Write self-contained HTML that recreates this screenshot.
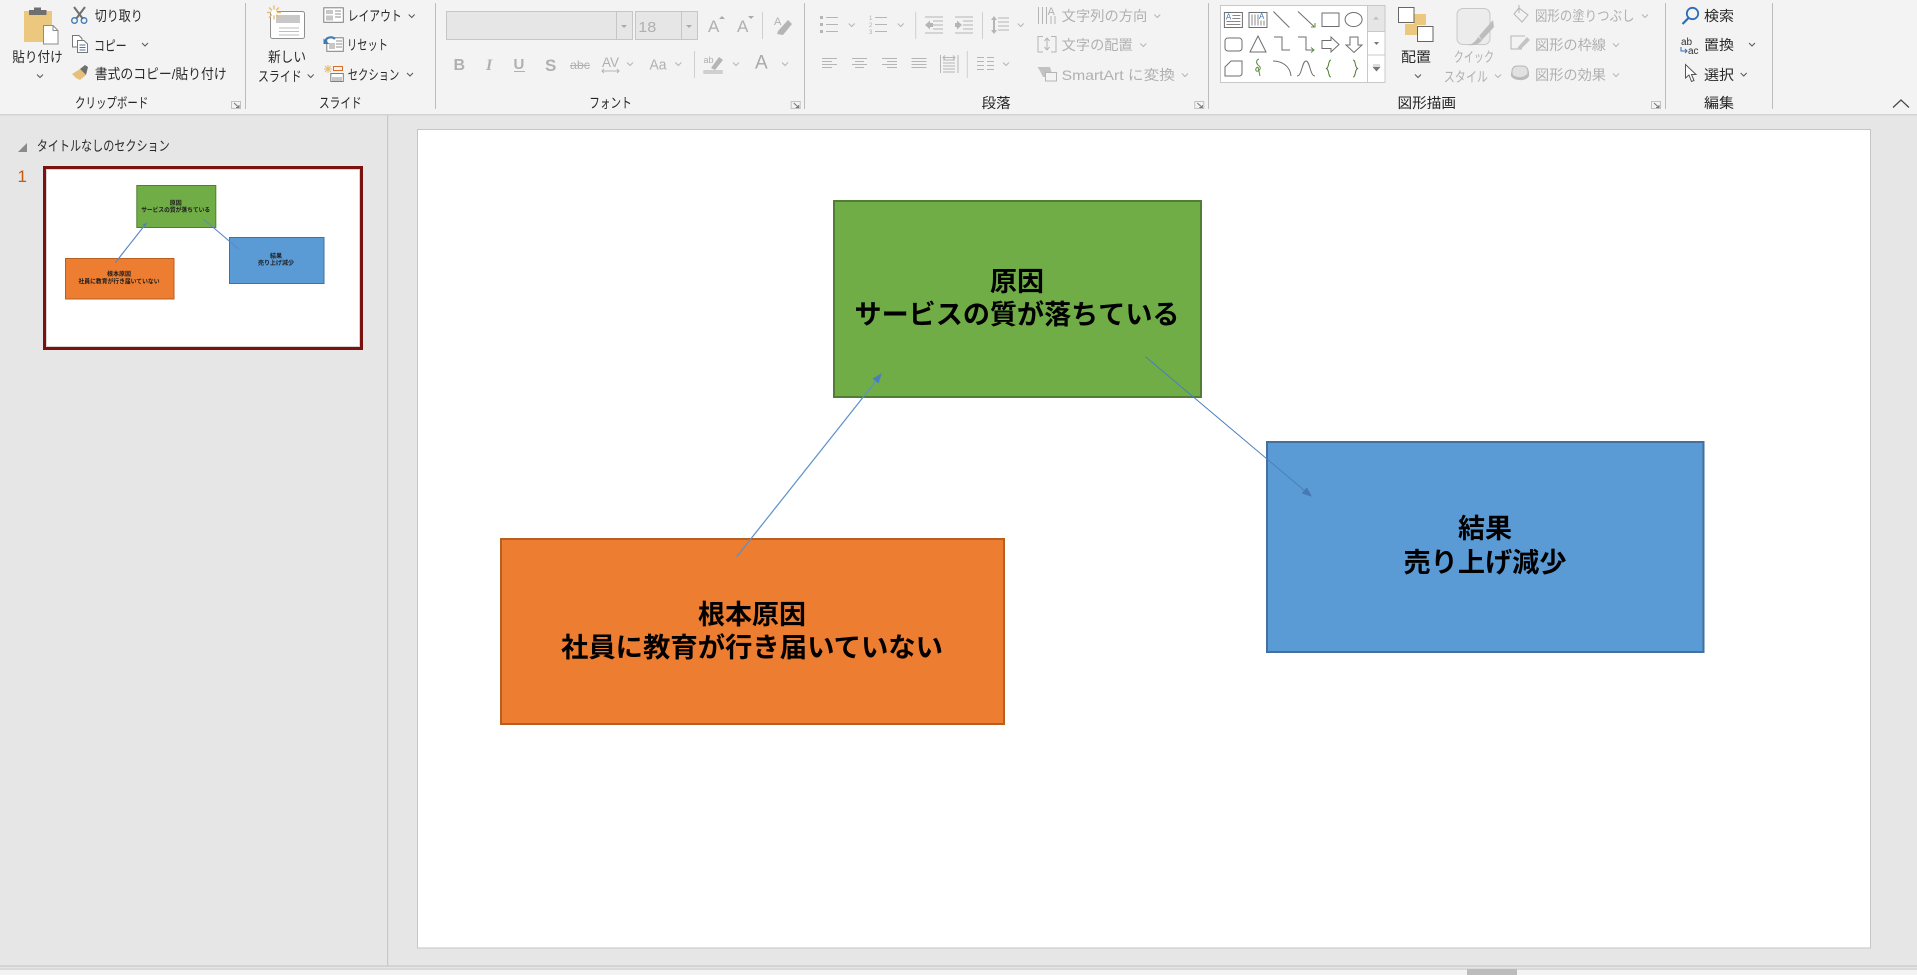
<!DOCTYPE html>
<html lang="ja"><head><meta charset="utf-8"><title>PowerPoint</title>
<style>
html,body{margin:0;padding:0;width:1917px;height:975px;overflow:hidden;background:#e6e6e6}
svg{display:block}
text{font-family:"Liberation Sans","Noto Sans CJK JP",sans-serif;font-size:14px;fill:#2a2a2a}
.d{fill:#b0b0b0}
.g{font-size:14px;fill:#262626}
.m{font-family:"Noto Sans CJK JP","Liberation Sans",sans-serif;font-size:27px;font-weight:700;fill:#000;text-anchor:middle}
.t{font-family:"Noto Sans CJK JP","Liberation Sans",sans-serif;font-size:6px;font-weight:700;fill:#1c1c1c;text-anchor:middle}
.sep{stroke:#bcbcbc;stroke-width:1}
.sub{stroke:#cfcfcf;stroke-width:1}
.ch{fill:none;stroke:#555;stroke-width:1}
.chd{fill:none;stroke:#b5b5b5;stroke-width:1}
.ic{fill:none;stroke:#b5b5b5;stroke-width:1}
.s{fill:none;stroke:#6e6e6e;stroke-width:1}
</style></head><body>
<svg width="1917" height="975" viewBox="0 0 1917 975" xmlns="http://www.w3.org/2000/svg">
<defs>
<path id="c" d="M-3,-1.5 L0,1.5 L3,-1.5"/>
<g id="lnch" fill="none" stroke="#a5a5a5"><path d="M0.5,0.5H9.5V7.5H0.5Z" stroke="#c2c2c2"/><path d="M3,2L8,6.5M5,6.5H8V4" stroke="#777"/></g>
</defs>

<!-- backgrounds -->
<rect x="0" y="0" width="1917" height="975" fill="#e6e6e6"/>
<rect x="0" y="0" width="1917" height="114" fill="#f3f3f3"/>
<rect x="0" y="114" width="1917" height="1.5" fill="#d3d3d3"/>
<rect x="387" y="115" width="1.2" height="851" fill="#c8c8c8"/>
<rect x="0" y="965.5" width="1917" height="1.2" fill="#c6c6c6"/>
<rect x="0" y="969" width="1917" height="6" fill="#f3f3f3"/>
<rect x="0" y="968.6" width="1917" height="1" fill="#c9c9c9"/>
<rect x="1467" y="969" width="50" height="6" fill="#bcbcbc"/>

<!-- separators -->
<g class="sep"><path d="M245.500,3V109M435.500,3V109M804.500,3V109M1208.500,3V109M1665.500,3V109M1772.500,3V109"/></g>

<!-- Clipboard group -->
<rect x="24" y="11" width="28" height="31" fill="#ecc87f"/>
<path d="M29,15V10H34V7.500H41V10H46.500V15Z" fill="#6f6f6f"/>
<path d="M43.500,25.500H53L58,30.500V44H43.500Z" fill="#fff" stroke="#8b8b8b"/>
<path d="M53,25.500V30.500H58" fill="none" stroke="#8b8b8b"/>
<text x="12.300" y="62" textLength="50.400" lengthAdjust="spacingAndGlyphs">貼り付け</text>
<use href="#c" x="40" y="76" class="ch"/>
<!-- scissors -->
<path d="M74,7L83,19M85,7L76,19" fill="none" stroke="#6f6f6f" stroke-width="2"/>
<circle cx="74.500" cy="20.500" r="2.800" fill="none" stroke="#3e78b5" stroke-width="1.300"/>
<circle cx="84" cy="20.500" r="2.800" fill="none" stroke="#3e78b5" stroke-width="1.300"/>
<text x="94.700" y="21" textLength="48" lengthAdjust="spacingAndGlyphs">切り取り</text>
<!-- copy -->
<path d="M72.500,35.500H79L82,38.500V47H72.500Z" fill="#fff" stroke="#777"/>
<path d="M77.500,40.500H84L87.500,44V52.500H77.500Z" fill="#fff" stroke="#777"/>
<path d="M79.500,45H85.500M79.500,47.500H85.500M79.500,50H85.500" stroke="#3e78b5"/>
<text x="94" y="51" textLength="32.700" lengthAdjust="spacingAndGlyphs">コピー</text>
<use href="#c" x="145" y="44.500" class="ch"/>
<!-- brush -->
<path d="M72,74L80,69L86,75L80,80L76,78Z" fill="#e6bf7a"/>
<path d="M80,69L85,65L88,67L86,75Z" fill="#6f6f6f"/>
<text x="94.700" y="79" textLength="132" lengthAdjust="spacingAndGlyphs">書式のコピー/貼り付け</text>
<text class="g" x="75" y="108" textLength="73.300" lengthAdjust="spacingAndGlyphs">クリップボード</text>
<use href="#lnch" x="231" y="101"/>

<!-- Slide group -->
<rect x="270.500" y="11.500" width="34" height="27" rx="2" fill="#fff" stroke="#8f8f8f"/>
<rect x="276" y="15" width="24" height="8" fill="#c8c8c8"/>
<path d="M279,28H299M279,31.500H299M279,35H299" stroke="#bdbdbd"/>
<g stroke="#e6bd74" stroke-width="1.400"><path d="M267,12.500H281M274,5.500V19.500M269,7.500L279,17.500M279,7.500L269,17.500"/></g>
<circle cx="274" cy="12.500" r="3" fill="#fff"/>
<text x="268" y="62" textLength="38" lengthAdjust="spacingAndGlyphs">新しい</text>
<text x="258" y="81.500" textLength="43.700" lengthAdjust="spacingAndGlyphs">スライド</text>
<use href="#c" x="310.700" y="76" class="ch"/>
<rect x="323.800" y="7.800" width="19.500" height="14.500" fill="#fff" stroke="#7f7f7f"/>
<rect x="326" y="10" width="7" height="4" fill="#c7c7c7"/><rect x="326" y="15.500" width="7" height="5" fill="#c7c7c7"/>
<path d="M335,11H341M335,14H341M335,17H341" stroke="#8f8f8f"/>
<text x="347.700" y="21" textLength="54" lengthAdjust="spacingAndGlyphs">レイアウト</text>
<use href="#c" x="411.700" y="16" class="ch"/>
<rect x="326.800" y="37.800" width="16.500" height="13.500" fill="#fff" stroke="#7f7f7f"/>
<rect x="329" y="43" width="6" height="6" fill="#c7c7c7"/>
<path d="M336,41H342M336,44H342M336,47H342" stroke="#8f8f8f"/>
<path d="M325,42C326,37 332,36 335,39" fill="none" stroke="#3e78b5" stroke-width="2"/>
<path d="M323.500,38.500L329.500,44H323.500Z" fill="#3e78b5"/>
<text x="347" y="50" textLength="41" lengthAdjust="spacingAndGlyphs">リセット</text>
<g stroke="#e6bd74" stroke-width="1.100"><path d="M324,69H332M328,65V73M325,66L331,72M331,66L325,72"/></g>
<rect x="333.500" y="66.500" width="9" height="4" fill="none" stroke="#d9702a"/>
<rect x="330.800" y="73.500" width="12.500" height="8" fill="#fff" stroke="#7f7f7f"/>
<rect x="332" y="77" width="10" height="4" fill="#c7c7c7"/>
<text x="347.700" y="80" textLength="51.600" lengthAdjust="spacingAndGlyphs">セクション</text>
<use href="#c" x="410" y="74.500" class="ch"/>
<text class="g" x="319" y="108" textLength="42.700" lengthAdjust="spacingAndGlyphs">スライド</text>

<!-- Font group -->
<rect x="446.500" y="11.500" width="186" height="28" fill="#e6e6e6" stroke="#c6c6c6"/>
<path d="M616.500,12V39" stroke="#c6c6c6"/>
<path d="M621,25H627L624,28Z" fill="#aaa"/>
<rect x="635.500" y="11.500" width="62" height="28" fill="#e6e6e6" stroke="#c6c6c6"/>
<path d="M681.500,12V39" stroke="#c6c6c6"/>
<path d="M686,25H692L689,28Z" fill="#aaa"/>
<text class="d" x="638.300" y="32" textLength="18" lengthAdjust="spacingAndGlyphs" style="font-size:15px">18</text>
<text class="d" x="708" y="32" style="font-size:17px">A</text><path d="M719,19H725L722,16Z" fill="#aaa"/>
<text class="d" x="737" y="32" style="font-size:17px">A</text><path d="M748,16H754L751,19Z" fill="#aaa"/>
<path class="sub" d="M762.500,12V39"/>
<text class="d" x="774" y="25" style="font-size:11px">A</text>
<path d="M778,31L788,20L792,24L783,35L777,34Z" fill="#b5b5b5"/>
<text class="d" x="453.500" y="70" style="font-size:16px;font-weight:700">B</text>
<text class="d" x="486" y="70" style="font-size:16px;font-style:italic;font-weight:700;font-family:'Liberation Serif',serif">I</text>
<text class="d" x="513.500" y="69" style="font-size:15px;font-weight:700">U</text><path d="M514,71.500H525" stroke="#b0b0b0"/>
<text class="d" x="545" y="71" style="font-size:17px;font-weight:700">S</text>
<text class="d" x="570" y="69" textLength="20" lengthAdjust="spacingAndGlyphs" style="font-size:12px">abc</text><path d="M570,65.500H590" stroke="#b0b0b0"/>
<text class="d" x="602" y="67" textLength="17" lengthAdjust="spacingAndGlyphs" style="font-size:14px">AV</text>
<path d="M602,71H619M604,69L602,71L604,73M617,69L619,71L617,73" class="ic"/>
<use href="#c" x="630" y="64" class="chd"/>
<text class="d" x="649.500" y="69.500" textLength="17" lengthAdjust="spacingAndGlyphs" style="font-size:15px">Aa</text>
<use href="#c" x="678.300" y="64" class="chd"/>
<path class="sub" d="M694.500,51V78"/>
<text class="d" x="703.500" y="63" style="font-size:9px">ab</text>
<path d="M711,68L719,57L723,60L715,70Z" fill="#b5b5b5"/>
<rect x="703.300" y="70" width="19.500" height="4" fill="#cfcfcf"/>
<use href="#c" x="736" y="64" class="chd"/>
<text class="d" x="755" y="68.500" style="font-size:19px;fill:#a8a8a8">A</text>
<use href="#c" x="785" y="64" class="chd"/>
<text class="g" x="589.300" y="108" textLength="42.400" lengthAdjust="spacingAndGlyphs">フォント</text>
<use href="#lnch" x="790.700" y="101"/>

<!-- Paragraph group -->
<g fill="#b5b5b5"><rect x="820" y="16" width="3" height="3"/><rect x="820" y="23" width="3" height="3"/><rect x="820" y="30" width="3" height="3"/></g>
<path class="ic" d="M826,17.500H838M826,24.500H838M826,31.500H838"/>
<use href="#c" x="851.700" y="25" class="chd"/>
<text class="d" x="869" y="20" style="font-size:6px">1</text><text class="d" x="869" y="27" style="font-size:6px">2</text><text class="d" x="869" y="34" style="font-size:6px">3</text>
<path class="ic" d="M875,17.500H887M875,24.500H887M875,31.500H887"/>
<use href="#c" x="900.700" y="25" class="chd"/>
<path class="sub" d="M915.700,12V39"/>
<path class="ic" d="M925,17H943M933,21H943M933,25H943M933,29H943M925,33H943"/>
<path d="M925,25L930,20.500V23H933V27H930V29.500Z" fill="#b5b5b5"/>
<path class="ic" d="M955,17H973M963,21H973M963,25H973M963,29H973M955,33H973"/>
<path d="M962,25L957,20.500V23H955V27H957V29.500Z" fill="#b5b5b5"/>
<path class="sub" d="M982.500,12V39"/>
<path class="ic" d="M998,18H1009M998,22H1009M998,26H1009M998,30H1009"/>
<path d="M994,16L997,20H995V30H997L994,34L991,30H993V20H991Z" fill="#b5b5b5"/>
<use href="#c" x="1020.700" y="25" class="chd"/>
<path class="ic" d="M1038.500,7V24M1042.500,7V24M1046.500,7V24"/>
<text class="d" x="1047.500" y="15" style="font-size:11px">A</text>
<path class="ic" d="M1051,16V24M1055,16V24"/>
<text class="d" x="1061.700" y="21" textLength="85.600" lengthAdjust="spacingAndGlyphs">文字列の方向</text>
<use href="#c" x="1157.300" y="16" class="chd"/>
<path class="ic" d="M1043,36.500H1038V52H1043M1051,36.500H1056V52H1051M1047,38V50M1044.500,41L1047,38L1049.500,41M1044.500,47L1047,50L1049.500,47"/>
<text class="d" x="1061.700" y="50" textLength="71" lengthAdjust="spacingAndGlyphs">文字の配置</text>
<use href="#c" x="1143.300" y="45" class="chd"/>
<path d="M1037.500,67H1050L1053,77H1043L1040,71Z" fill="#c2c2c2"/>
<rect x="1045.500" y="72.500" width="11" height="8.500" fill="#f3f3f3" stroke="#b5b5b5"/>
<text class="d" x="1061.700" y="80" textLength="113.300" lengthAdjust="spacingAndGlyphs">SmartArt に変換</text>
<use href="#c" x="1185" y="75" class="chd"/>
<path class="ic" d="M822,58.500H837M822,61.500H832M822,64.500H837M822,67.500H832"/>
<path class="ic" d="M852,58.500H867M855,61.500H864M852,64.500H867M855,67.500H864"/>
<path class="ic" d="M882,58.500H897M887,61.500H897M882,64.500H897M887,67.500H897"/>
<path class="ic" d="M911.500,58.500H926.500M911.500,61.500H926.500M911.500,64.500H926.500M911.500,67.500H926.500"/>
<path class="ic" d="M940.500,55V73M958,55V73M943,60H955M943,63H955M943,66H955M943,69H955M943,72H955"/>
<path class="ic" d="M943,57.500H955M945,55.500L943,57.500L945,59.500M953,55.500L955,57.500L953,59.500"/>
<path class="sub" d="M967.300,51V78"/>
<path class="ic" d="M977,57.500H984M987,57.500H994M977,61.500H984M987,61.500H994M977,65.500H984M987,65.500H994M977,69.500H984M987,69.500H994"/>
<use href="#c" x="1006" y="64" class="chd"/>
<text class="g" x="981.700" y="108" textLength="29" lengthAdjust="spacingAndGlyphs">段落</text>
<use href="#lnch" x="1194.300" y="101"/>

<!-- Shapes gallery -->
<rect x="1220.500" y="5.500" width="164.500" height="77" fill="#fff" stroke="#c8c8c8"/>
<rect x="1367.500" y="5.500" width="17.500" height="26" fill="#e6e6e6" stroke="#c8c8c8"/>
<path d="M1367.500,31.500H1385M1367.500,55H1385M1367.500,5V82" stroke="#c8c8c8" fill="none"/>
<path d="M1373,19.500H1379L1376,16.500Z" fill="#c0c0c0"/>
<path d="M1374,42H1379L1376.500,45Z" fill="#777"/>
<path d="M1373,65H1380M1373,67H1380L1376.500,71Z" fill="#777" stroke="#777" stroke-width=".6"/>
<g transform="translate(1233.400,19.500)"><rect class="s" x="-9" y="-7" width="18" height="15"/><text x="-7.500" y="0" style="font-size:8px;fill:#3e78b5">A</text><path d="M-1,-4H7M-1,-1H7M-7,2H7M-7,5H7" stroke="#888"/></g>
<g transform="translate(1258,19.500)"><rect class="s" x="-9" y="-7" width="18" height="15"/><text x="1" y="-.5" style="font-size:8px;fill:#3e78b5">A</text><path d="M-6,-5V6M-3,-5V6M0,-5V6M6,1V6M3,1V6" stroke="#888"/></g>
<path class="s" transform="translate(1281.400,19.500)" d="M-8,-8L8,8"/>
<g transform="translate(1306,19.500)"><path class="s" d="M-8,-8L8,7"/><path d="M5,7.500H9V3.500" fill="none" stroke="#5c8f3a"/></g>
<rect class="s" x="1322" y="13" width="17" height="13.500"/>
<ellipse class="s" cx="1353.600" cy="19.500" rx="8.500" ry="7"/>
<rect class="s" x="1225" y="38" width="17" height="13" rx="3"/>
<path class="s" d="M1258,36L1266,52H1250Z"/>
<path class="s" d="M1274,37H1282V50H1290"/>
<path class="s" d="M1298,37H1306V50H1314"/>
<path d="M1311,47.500L1314,50L1311,52.500" fill="none" stroke="#5c8f3a"/>
<path class="s" d="M1322,40.500H1331V37L1339,44.500L1331,52V48.500H1322Z"/>
<path class="s" d="M1350,37H1358V45H1362L1354,52.500L1346,45H1350Z"/>
<path class="s" d="M1225,67L1231,61H1242V73C1242,75 1241,76 1239,76H1225Z"/>
<path d="M1259,59C1256,60 1256,63 1258,65C1261,67 1261,69 1258,71C1255,72 1255,68 1258,67M1258,67L1260,76" fill="none" stroke="#5c8f3a"/>
<path class="s" d="M1273,61C1282,61 1290,66 1291,76"/>
<path class="s" d="M1297,76C1302,76 1302,61 1306,61C1310,61 1310,76 1315,76"/>
<path d="M1331,60C1328,60 1329.500,67 1326.500,68.500C1329.500,70 1328,77 1331,77" fill="none" stroke="#4a7a2e"/>
<path d="M1353,60C1356,60 1354.500,67 1357.500,68.500C1354.500,70 1356,77 1353,77" fill="none" stroke="#4a7a2e"/>

<!-- Arrange -->
<rect x="1414" y="14" width="12" height="11" fill="#ecc87f"/>
<rect x="1405" y="24" width="12" height="11" fill="#ecc87f"/>
<rect x="1398.500" y="7.500" width="15.500" height="15" fill="#fff" stroke="#666"/>
<rect x="1417.500" y="26.500" width="15.500" height="15" fill="#fff" stroke="#666"/>
<text x="1401" y="62" textLength="30" lengthAdjust="spacingAndGlyphs">配置</text>
<use href="#c" x="1418" y="76" class="ch"/>
<!-- Quick style -->
<rect x="1457" y="8.500" width="33" height="36" rx="6" fill="#ececec" stroke="#c8c8c8"/>
<path d="M1479,36L1493,20L1494,27L1482,40Z" fill="#bdbdbd"/>
<path d="M1467,45C1472,45 1476,41 1478,37L1482,40C1480,44 1474,46 1467,45Z" fill="#bcbcbc"/>
<text class="d" x="1453.800" y="62" textLength="40.200" lengthAdjust="spacingAndGlyphs">クイック</text>
<text class="d" x="1443.700" y="82" textLength="44.300" lengthAdjust="spacingAndGlyphs">スタイル</text>
<use href="#c" x="1498" y="76" class="chd"/>
<!-- fill/outline/effects -->
<path class="ic" d="M1519,8L1528,15L1522,22L1514,14Z"/><path d="M1519,5V13" class="ic"/>
<text class="d" x="1535" y="21" textLength="99.400" lengthAdjust="spacingAndGlyphs">図形の塗りつぶし</text>
<use href="#c" x="1645" y="16" class="chd"/>
<path class="ic" d="M1525,36H1511V49H1522"/><path d="M1518,47L1527,37L1530,40L1521,49L1517,50Z" fill="#c4c4c4"/>
<text class="d" x="1535" y="50" textLength="71" lengthAdjust="spacingAndGlyphs">図形の枠線</text>
<use href="#c" x="1616" y="45" class="chd"/>
<rect x="1512" y="66" width="16" height="13" rx="5" fill="#e1e1e1" stroke="#b5b5b5"/>
<path d="M1511,76C1514,81 1526,82 1529,76V71C1526,79 1514,79 1511,72Z" fill="#bbb"/>
<text class="d" x="1535" y="80" textLength="71" lengthAdjust="spacingAndGlyphs">図形の効果</text>
<use href="#c" x="1616" y="75" class="chd"/>
<text class="g" x="1397.500" y="108" textLength="58.500" lengthAdjust="spacingAndGlyphs">図形描画</text>
<use href="#lnch" x="1651" y="101"/>

<!-- Editing -->
<circle cx="1692.500" cy="13.500" r="5.700" fill="none" stroke="#2e6fb3" stroke-width="1.800"/>
<path d="M1688.500,18L1682.500,24" stroke="#2e6fb3" stroke-width="2.200"/>
<text x="1704" y="21" textLength="30" lengthAdjust="spacingAndGlyphs">検索</text>
<text x="1681" y="45" style="font-size:10px;fill:#333">ab</text>
<text x="1688" y="54" style="font-size:10px;fill:#333">ac</text>
<path d="M1681,47V51H1687M1685,49L1687,51L1685,53" fill="none" stroke="#2e6fb3"/>
<text x="1704" y="50" textLength="30" lengthAdjust="spacingAndGlyphs">置換</text>
<use href="#c" x="1752" y="44.500" class="ch"/>
<path d="M1685.500,64.500V78L1689,75L1691.500,81.500L1694,80.500L1691.500,74.500H1696Z" fill="#fff" stroke="#555"/>
<text x="1704" y="80" textLength="30" lengthAdjust="spacingAndGlyphs">選択</text>
<use href="#c" x="1743.700" y="74.500" class="ch"/>
<text class="g" x="1704" y="108" textLength="30" lengthAdjust="spacingAndGlyphs">編集</text>
<path d="M1893,107.500L1901,100L1909,107.500" fill="none" stroke="#444" stroke-width="1.200"/>

<!-- Left panel -->
<path d="M18,152H27V143Z" fill="#8a8a8a"/>
<text x="36.700" y="151" textLength="133" lengthAdjust="spacingAndGlyphs">タイトルなしのセクション</text>
<text x="17.500" y="182" style="font-size:17px;fill:#c55a11" textLength="8">1</text>
<rect x="44.500" y="167.500" width="317" height="181" fill="#fff" stroke="#7b1210" stroke-width="3"/>
<rect x="46.500" y="169.500" width="313" height="177" fill="none" stroke="#d5d5d5" stroke-width="1"/>
<rect x="136.800" y="185.500" width="79" height="42" fill="#70ad47" stroke="#507e32"/>
<rect x="65.500" y="258.500" width="108.500" height="40.500" fill="#ed7d31" stroke="#b85f20"/>
<rect x="229.500" y="237.500" width="94.500" height="46" fill="#5b9bd5" stroke="#41719c"/>
<path d="M115.300,262.700L146.700,222.700" stroke="#5b8ac8" stroke-width="1.200"/>
<path d="M146.700,222.700L142.500,224.800L145,226.800Z" fill="#4e80bd"/>
<path d="M203.300,219L239,249.300" stroke="#5b8ac8" stroke-width="1.100"/>
<text class="t" x="175.700" y="205">原因</text>
<text class="t" x="175.700" y="212" textLength="69" lengthAdjust="spacingAndGlyphs">サービスの質が落ちている</text>
<text class="t" x="119" y="276">根本原因</text>
<text class="t" x="119" y="283.300" textLength="81" lengthAdjust="spacingAndGlyphs">社員に教育が行き届いていない</text>
<text class="t" x="276" y="258">結果</text>
<text class="t" x="276" y="265">売り上げ減少</text>

<!-- Main slide -->
<rect x="417.500" y="129.500" width="1453" height="818.500" fill="#fff" stroke="#c6c6c6"/>
<rect x="834" y="201" width="367" height="196" fill="#70ad47" stroke="#507e32" stroke-width="2"/>
<rect x="501" y="539" width="503" height="185" fill="#ed7d31" stroke="#b85f20" stroke-width="2"/>
<rect x="1267" y="442" width="436.500" height="210" fill="#5b9bd5" stroke="#41719c" stroke-width="2"/>
<text class="m" x="1017" y="291">原因</text>
<text class="m" x="1017" y="324" textLength="325" lengthAdjust="spacingAndGlyphs">サービスの質が落ちている</text>
<text class="m" x="752" y="624">根本原因</text>
<text class="m" x="752" y="657" textLength="382" lengthAdjust="spacingAndGlyphs">社員に教育が行き届いていない</text>
<text class="m" x="1485" y="538">結果</text>
<text class="m" x="1485" y="572" textLength="163" lengthAdjust="spacingAndGlyphs">売り上げ減少</text>
<path d="M736.700,556.700L876,381" stroke="#5b8fc9" stroke-width="1.200" fill="none"/>
<path d="M881.700,373.300L878.600,383.600L872.400,378.600Z" fill="#4a7ebb"/>
<path d="M1145.500,356.700L1305,491" stroke="#4a7ebb" stroke-width="1" fill="none"/>
<path d="M1312,496.700L1301.700,493.400L1306.900,487.200Z" fill="#4878b3"/>
</svg>
</body></html>
